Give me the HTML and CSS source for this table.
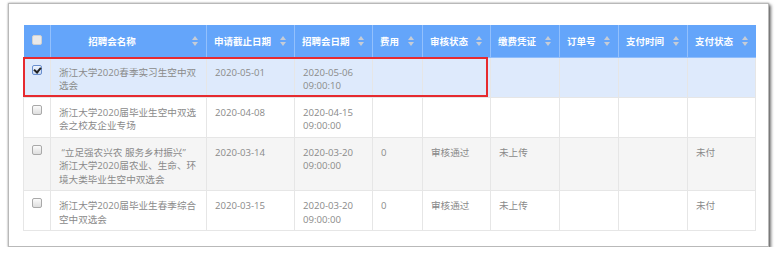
FILE: index.html
```html
<!DOCTYPE html>
<html lang="zh-CN">
<head>
<meta charset="utf-8">
<title>招聘会</title>
<link rel="stylesheet" href="styles.css">
</head>
<body>
<div class="frame">
  <div class="grid-wrap">
    <table class="grid">
      <colgroup>
        <col class="c-chk"><col class="c-name"><col class="c-dl"><col class="c-date"><col class="c-fee"><col class="c-aud"><col class="c-cert"><col class="c-ord"><col class="c-pt"><col class="c-ps">
      </colgroup>
      <thead>
        <tr>
          <th class="chk"><span class="box"></span></th>
          <th class="name"><span class="lbl">招聘会名称</span><span class="sort"></span></th>
          <th><span class="lbl">申请截止日期</span><span class="sort"></span></th>
          <th><span class="lbl">招聘会日期</span><span class="sort"></span></th>
          <th><span class="lbl">费用</span><span class="sort"></span></th>
          <th><span class="lbl">审核状态</span><span class="sort"></span></th>
          <th><span class="lbl">缴费凭证</span><span class="sort"></span></th>
          <th><span class="lbl">订单号</span><span class="sort"></span></th>
          <th><span class="lbl">支付时间</span><span class="sort"></span></th>
          <th><span class="lbl">支付状态</span><span class="sort"></span></th>
        </tr>
      </thead>
      <tbody>
        <tr class="selected">
          <td class="chk"><span class="box checked"></span></td>
          <td>浙江大学2020春季实习生空中双选会</td>
          <td>2020-05-01</td>
          <td>2020-05-06<br>09:00:10</td>
          <td></td><td></td><td></td><td></td><td></td><td></td>
        </tr>
        <tr>
          <td class="chk"><span class="box"></span></td>
          <td>浙江大学2020届毕业生空中双选会之校友企业专场</td>
          <td>2020-04-08</td>
          <td>2020-04-15<br>09:00:00</td>
          <td></td><td></td><td></td><td></td><td></td><td></td>
        </tr>
        <tr class="stripe">
          <td class="chk"><span class="box"></span></td>
          <td>&nbsp;“立足强农兴农 服务乡村振兴”<br>浙江大学2020届农业、生命、环境大类毕业生空中双选会</td>
          <td>2020-03-14</td>
          <td>2020-03-20<br>09:00:00</td>
          <td>0</td>
          <td>审核通过</td>
          <td>未上传</td>
          <td></td><td></td>
          <td>未付</td>
        </tr>
        <tr>
          <td class="chk"><span class="box"></span></td>
          <td>浙江大学2020届毕业生春季综合空中双选会</td>
          <td>2020-03-15</td>
          <td>2020-03-20<br>09:00:00</td>
          <td>0</td>
          <td>审核通过</td>
          <td>未上传</td>
          <td></td><td></td>
          <td>未付</td>
        </tr>
      </tbody>
    </table>
    <div class="highlight"></div>
  </div>
</div>
</body>
</html>
```

FILE: styles.css
```css
html, body {
  margin: 0;
  padding: 0;
  background: #ffffff;
}

body {
  font-family: "Open Sans", "Noto Sans CJK SC", sans-serif;
}

.frame {
  box-sizing: border-box;
  margin: 3px 0 0 8px;
  width: 761px;
  height: 244px;
  border: 1px solid #b9b9b9;
  box-shadow: 0 0 2px rgba(0, 0, 0, 0.35), 2px 2px 3px rgba(0, 0, 0, 0.55);
  padding: 21px 0 0 14px;
  background: #fff;
}

.grid-wrap {
  position: relative;
  width: 732px;
}

.grid {
  width: 732px;
  table-layout: fixed;
  border-collapse: collapse;
}

.c-chk { width: 27px; }
.c-name { width: 156px; }
.c-dl { width: 88px; }
.c-date { width: 78px; }
.c-fee { width: 50px; }
.c-aud { width: 68px; }
.c-cert { width: 69px; }
.c-ord { width: 59px; }
.c-pt { width: 69px; }
.c-ps { width: 68px; }

.grid th {
  position: relative;
  height: 32px;
  padding: 0 16px 0 7px;
  background: #64a5fa;
  color: #ffffff;
  font-size: 9.5px;
  font-weight: bold;
  text-align: left;
  white-space: nowrap;
  overflow: hidden;
  border-left: 1px solid #93c0fc;
  border-bottom: 1px solid #8fbdfb;
  box-sizing: border-box;
}

.grid th:first-child {
  border-left: none;
}

.grid th.name {
  text-align: center;
  padding-right: 40px;
}

.grid th.chk,
.grid td.chk {
  padding: 0;
  text-align: center;
}

.sort {
  position: absolute;
  right: 8px;
  top: 11px;
  width: 6px;
  height: 10px;
}

.sort::before,
.sort::after {
  content: "";
  position: absolute;
  left: 0;
  border-left: 3px solid transparent;
  border-right: 3px solid transparent;
}

.sort::before {
  top: 0;
  border-bottom: 4px solid #c6ccd6;
}

.sort::after {
  bottom: 0;
  border-top: 4px solid #c6ccd6;
}

.grid td {
  padding: 8px 8px 4px 8px;
  font-size: 9.6px;
  line-height: 13.5px;
  color: #8a8a8a;
  vertical-align: top;
  border: 1px solid #e6e6e6;
  border-top: none;
  word-break: break-all;
}

.grid td.chk {
  padding-top: 7px;
}

.grid tr.selected td {
  background: #deeafc;
}

.grid tr.stripe td {
  background: #f5f5f5;
}

.box {
  display: inline-block;
  vertical-align: top;
  box-sizing: border-box;
  width: 10px;
  height: 10px;
  border: 1px solid #a9a9a9;
  border-radius: 2px;
  background: linear-gradient(#fbfbfb, #dedede);
}

th .box {
  border-color: #d0d0d0;
  background: #e9e9e9;
  margin-top: 1px;
}

.box.checked {
  position: relative;
  border-color: #6a8fcf;
  background: linear-gradient(#eef4fd, #c8d9f4);
}

.box.checked::after {
  content: "";
  position: absolute;
  left: 2px;
  top: 0px;
  width: 3px;
  height: 5px;
  border-right: 2px solid #222;
  border-bottom: 2px solid #222;
  transform: rotate(40deg);
}

.highlight {
  position: absolute;
  left: 0;
  top: 32px;
  width: 465px;
  height: 40px;
  box-sizing: border-box;
  border: 2px solid #e62a2f;
  pointer-events: none;
}
```
